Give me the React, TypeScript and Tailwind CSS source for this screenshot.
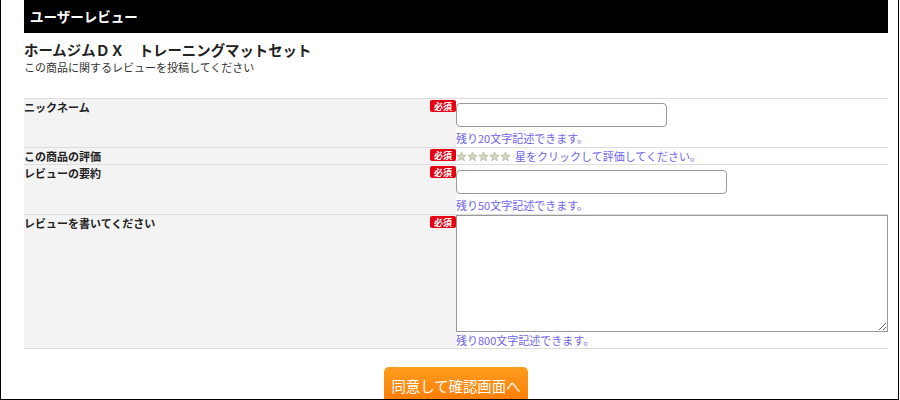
import React from 'react'

const font = { fontFamily: '"Noto Sans CJK JP", "Noto Sans", sans-serif' }

function Badge() {
  return (
    <span className="flex h-[12px] w-[26px] shrink-0 items-center justify-center rounded-[2px] bg-[#e60012] text-[9px] font-bold leading-none text-white">
      必須
    </span>
  )
}

function Star() {
  return (
    <svg width="11" height="11" viewBox="0 0 24 24">
      <path
        d="M12 2l2.9 6.9 7.1.6-5.4 4.7 1.7 7.1L12 17.5 5.7 21.3l1.7-7.1L2 9.5l7.1-.6z"
        fill="#d6d4be"
        stroke="#b5b39a"
        strokeWidth="1.5"
      />
    </svg>
  )
}

function Row({ label, children }: { label: string; children: React.ReactNode }) {
  return (
    <div className="grid grid-cols-[432px_1fr] border-t border-[#dddddd]">
      <div className="flex items-start justify-between bg-[#f3f3f3] pt-[1px]">
        <span className="text-[11px] font-bold leading-[14px] text-[#222]">{label}</span>
        <Badge />
      </div>
      <div className="bg-white">{children}</div>
    </div>
  )
}

const hint = 'text-[11px] leading-[14px] text-[#6e63ee]'

export default function App() {
  return (
    <div className="h-[400px] w-[899px] overflow-hidden border-x border-b border-black bg-white" style={font}>
      <div className="ml-[23px] mr-[10px]">
        <div className="flex h-[33px] items-center bg-black px-[6px] text-[13.5px] font-bold text-white">
          ユーザーレビュー
        </div>

        <div className="pt-[7px]">
          <h1 className="text-[14.4px] font-bold leading-[20px] text-[#222]">ホームジムＤＸ　トレーニングマットセット</h1>
          <p className="text-[11px] leading-[15px] text-[#333]">この商品に関するレビューを投稿してください</p>
        </div>

        <div className="mt-[23px] border-b border-[#dddddd]">
          <Row label="ニックネーム">
            <div className="pt-[4px] pb-[2px]">
              <input className="h-[24px] w-[211px] rounded-[4px] border border-[#999] bg-white" />
              <div className={`${hint} mt-[4px]`}>残り20文字記述できます。</div>
            </div>
          </Row>
          <Row label="この商品の評価">
            <div className="flex h-[16px] items-center gap-[4px]">
              <div className="flex">
                <Star />
                <Star />
                <Star />
                <Star />
                <Star />
              </div>
              <span className={hint}>星をクリックして評価してください。</span>
            </div>
          </Row>
          <Row label="レビューの要約">
            <div className="pt-[5px] pb-[2px]">
              <input className="h-[24px] w-[271px] rounded-[4px] border border-[#999] bg-white" />
              <div className={`${hint} mt-[4px]`}>残り50文字記述できます。</div>
            </div>
          </Row>
          <Row label="レビューを書いてください">
            <div className="pb-[1px]">
              <textarea className="block h-[117px] w-full resize border border-[#999] bg-white" />
              <div className={`${hint} mt-[1px]`}>残り800文字記述できます。</div>
            </div>
          </Row>
        </div>

        <div className="flex justify-center pt-[18px]">
          <button className="h-[38px] w-[144px] rounded-[5px] bg-gradient-to-b from-[#ff9d1e] to-[#ff7800] text-[14.4px] text-white">
            同意して確認画面へ
          </button>
        </div>
      </div>
    </div>
  )
}
